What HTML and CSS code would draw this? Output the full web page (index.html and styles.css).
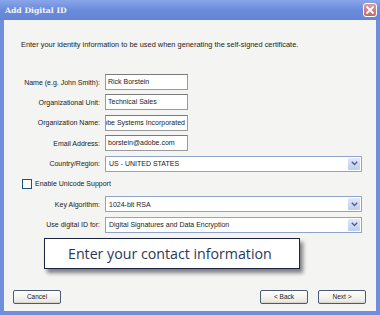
FILE: index.html
```html
<!DOCTYPE html>
<html>
<head><meta charset="utf-8"><link rel="stylesheet" href="styles.css"></head>
<body>
<div class="win">
  <div class="title">
    <span class="ttext">Add Digital ID</span>
    <span class="close"><svg width="10" height="10" viewBox="0 0 10 10"><path d="M1.5 1.5L8.5 8.5M8.5 1.5L1.5 8.5" stroke="#fff" stroke-width="1.8"/></svg></span>
  </div>
  <div class="body">
    <p class="intro">Enter your identity information to be used when generating the self-signed certificate.</p>
    <div class="form">
      <div class="row"><span class="lbl">Name (e.g. John Smith):</span><span class="inp">Rick Borstein</span></div>
      <div class="row"><span class="lbl">Organizational Unit:</span><span class="inp">Technical Sales</span></div>
      <div class="row"><span class="lbl">Organization Name:</span><span class="inp rtl"><span>Adobe Systems Incorporated</span></span></div>
      <div class="row"><span class="lbl">Email Address:</span><span class="inp">borstein@adobe.com</span></div>
      <div class="row"><span class="lbl">Country/Region:</span><span class="sel"><span class="val">US - UNITED STATES</span><span class="arr"><svg width="7" height="5" viewBox="0 0 7 5"><path d="M0.8 0.8L3.5 3.5L6.2 0.8" fill="none" stroke="#4d6185" stroke-width="1.4"/></svg></span></span></div>
      <div class="row chk"><span class="box"></span><span>Enable Unicode Support</span></div>
      <div class="row"><span class="lbl">Key Algorithm:</span><span class="sel"><span class="val">1024-bit RSA</span><span class="arr"><svg width="7" height="5" viewBox="0 0 7 5"><path d="M0.8 0.8L3.5 3.5L6.2 0.8" fill="none" stroke="#4d6185" stroke-width="1.4"/></svg></span></span></div>
      <div class="row"><span class="lbl">Use digital ID for:</span><span class="sel"><span class="val">Digital Signatures and Data Encryption</span><span class="arr"><svg width="7" height="5" viewBox="0 0 7 5"><path d="M0.8 0.8L3.5 3.5L6.2 0.8" fill="none" stroke="#4d6185" stroke-width="1.4"/></svg></span></span></div>
    </div>
    <div class="callout-wrap"><div class="callout">Enter your contact information</div></div>
    <div class="buttons">
      <span class="btn">Cancel</span>
      <span class="spacer"></span>
      <span class="btn">&lt; Back</span>
      <span class="btn">Next &gt;</span>
    </div>
  </div>
</div>
</body>
</html>
```
FILE: styles.css
```css
html, body { margin: 0; padding: 0; }
body { width: 380px; height: 315px; overflow: hidden; font-family: "Liberation Sans", Arial, sans-serif; }
.win {
  width: 380px; height: 315px; box-sizing: border-box;
  background: #6f8fdc;
  display: flex; flex-direction: column;
  padding: 0 4px 4px 4px;
}
.title {
  height: 20px; display: flex; align-items: center; justify-content: space-between;
  margin: 0 -4px; padding: 0 3px 0 5px;
  background: linear-gradient(#8aa6ea, #6a8bdb 50%, #6584d6);
}
.ttext { color: #f4f6fc; font-family: "DejaVu Serif", serif; font-size: 7.7px; font-weight: bold; }
.close {
  width: 14px; height: 14px; border: 1px solid #fff; border-radius: 3px; box-sizing: border-box;
  background: linear-gradient(#d99a9a, #c26a6a); display: flex; align-items: center; justify-content: center;
}
.body { flex: 1; background: #f4f4f2; display: flex; flex-direction: column; }
.intro { margin: 20px 0 0 17px; font-size: 7.4px; color: #222; }
.form { margin-top: 25px; display: flex; flex-direction: column; gap: 4.4px; }
.row { display: flex; align-items: center; height: 16px; font-size: 7px; color: #222; }
.lbl { width: 101px; text-align: right; padding-right: 5px; box-sizing: border-box; }
.inp {
  width: 83px; height: 16px; box-sizing: border-box; background: #fff;
  border: 1px solid #9a9a9a; border-top-color: #7a7a7a; padding: 0 2px; line-height: 14px; white-space: nowrap; overflow: hidden;
}
.rtl { direction: rtl; text-align: left; padding: 0 2px 0 0; }
.rtl span { direction: ltr; unicode-bidi: embed; }
.sel {
  width: 257px; height: 16px; box-sizing: border-box; background: #fff;
  border: 1px solid #8fa4c8; display: flex; align-items: center; justify-content: space-between; padding-left: 3px;
}
.arr {
  width: 12px; height: 12px; margin-right: 1px; border-radius: 1px;
  background: linear-gradient(#dfe8fb, #bccdf2); display: flex; align-items: center; justify-content: center;
}
.chk { padding-left: 18px; gap: 3px; }
.box { width: 10px; height: 10px; border: 1px solid #1c5180; background: #fff; box-sizing: border-box; }
.callout-wrap { padding: 5px 0 0 40px; }
.callout {
  width: 256px; height: 31px; box-sizing: border-box; background: #fff; border: 1.5px solid #1a2440;
  box-shadow: 3px 4px 4px rgba(30,30,40,0.55);
  font-family: "Open Sans", sans-serif; font-size: 14.2px; color: #2b3855; display: flex; align-items: center; padding-left: 23px;
}
.buttons { margin-top: 21px; display: flex; padding: 0 10px 0 9px; gap: 10px; }
.spacer { flex: 1; }
.btn {
  width: 48px; height: 14px; box-sizing: border-box; border: 1px solid #4a5a78; border-radius: 2px;
  background: linear-gradient(#fff, #ecebe5 85%, #d6d0c5); font-size: 6.5px; color: #222;
  display: flex; align-items: center; justify-content: center;
}
```
